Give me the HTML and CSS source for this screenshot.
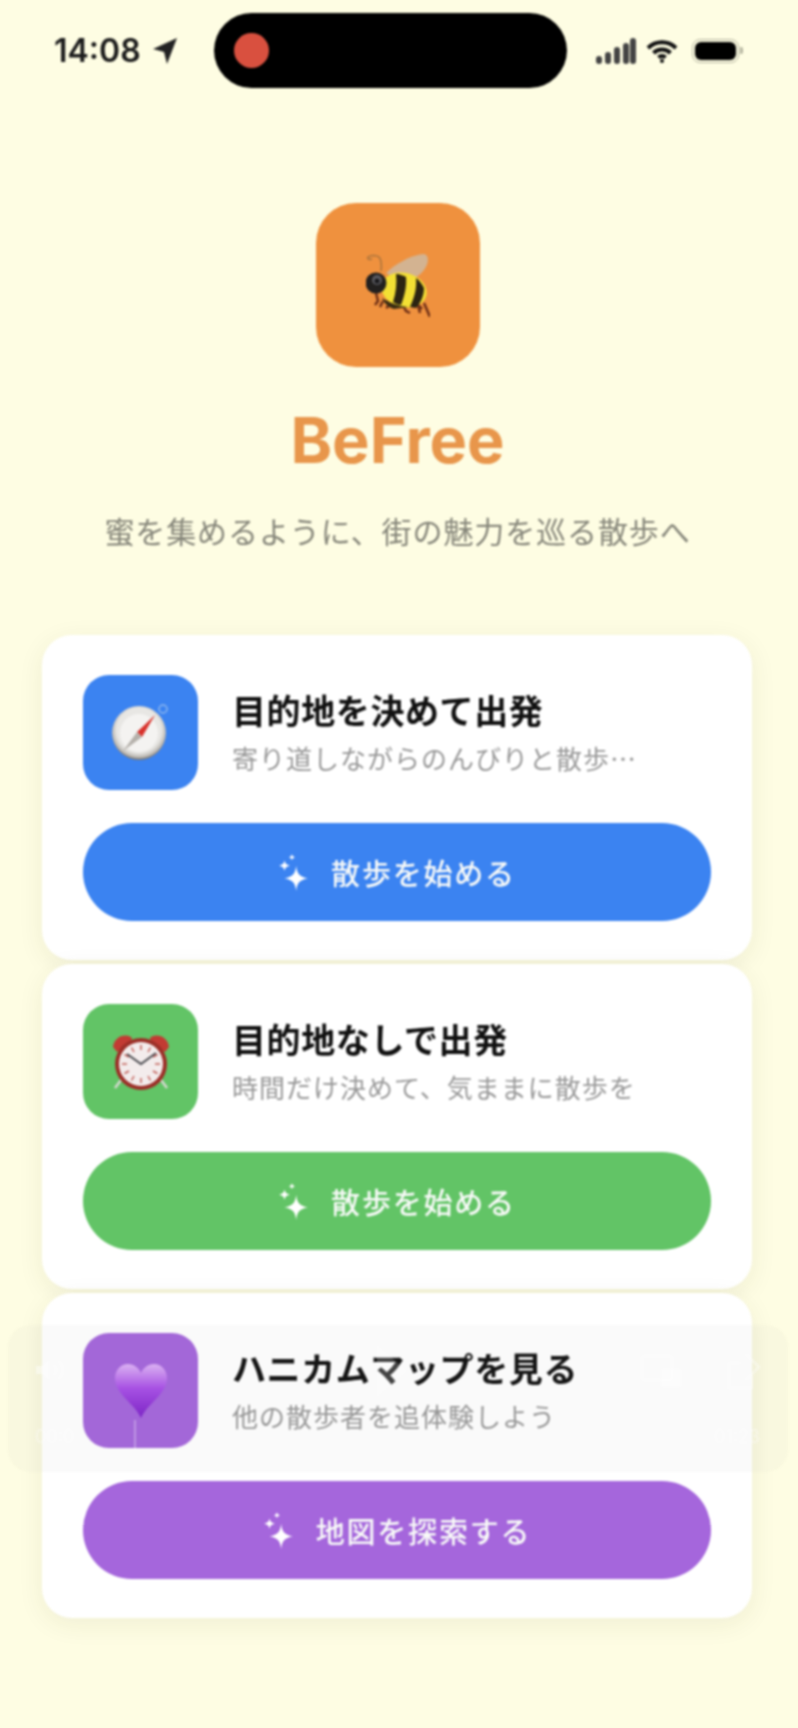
FILE: index.html
```html
<!DOCTYPE html>
<html lang="ja">
  <head>
    <meta charset="UTF-8" />
    <title>BeFree</title>
    <link rel="stylesheet" href="styles.css">
  </head>

  <body>
    <svg class="defs" width="0" height="0" aria-hidden="true">
      <symbol id="sparkles" viewBox="0 0 28 35">
        <path d="M17 11 C18 19 20 21 28 23 C20 25 18 27 17 35 C16 27 14 25 6 23 C14 21 16 19 17 11 Z" />
        <path d="M6 6 C6.5 9 7.5 10 11 11 C7.5 12 6.5 13 6 16 C5.5 13 4.500 12 1 11 C4.500 10 5.500 9 6 6 Z" />
        <path d="M13 0 C13.300 1.700 14 2.400 16 3 C14 3.600 13.300 4.300 13 6 C12.700 4.300 12 3.600 10 3 C12 2.400 12.700 1.700 13 0 Z" />
      </symbol>
    </svg>

    <div class="screen">
      <header class="statusbar">
        <div class="status-left">
          <span class="clock">14:08</span>
          <svg class="arrow" viewBox="0 0 26 28"><path d="M25 1 L15 27 L12 15 L1 12 Z" /></svg>
        </div>
        <div class="island"><span class="rec"></span></div>
        <div class="status-right">
          <svg class="signal" viewBox="0 0 40 26">
            <rect x="0" y="18" width="6" height="8" rx="3" />
            <rect x="9" y="14" width="6" height="12" rx="3" />
            <rect x="18" y="9" width="6" height="17" rx="3" />
            <rect x="27" y="5" width="6" height="21" rx="3" />
            <rect x="34" y="0" width="6" height="26" rx="3" />
          </svg>
          <svg class="wifi" viewBox="0 0 32 24">
            <path d="M2 9 A20 20 0 0 1 30 9" />
            <path d="M7.500 14 A12 12 0 0 1 24.500 14" />
            <path d="M12.500 18.500 A5 5 0 0 1 19.500 18.500" />
            <circle cx="16" cy="22" r="2" class="wifi-dot" />
          </svg>
          <div class="battery"><span class="battery-fill"></span></div>
        </div>
      </header>

      <section class="hero">
        <div class="logo">
          <svg class="bee" viewBox="0 0 64 64">
            <path d="M15 18 C16 12 15 6 13 4 C10 2 5 2 2 4 C1 6 3 7 6 6" fill="none" stroke="#a8733c" stroke-width="1.500" />
            <path d="M20 20 C28 12 44 2 58 1 C66 3 61 18 50 24 C40 28 28 26 20 20 Z" fill="#d3b391" />
            <path d="M10 40 L12 48 L9 52 M17 48 L14 54 M20 48 L24 52 L20 55 M36 50 L40 58 L44 60 M52 52 L56 56 M52 52 L54 60 M58 50 L64 64" stroke="#6e2f16" stroke-width="2.500" fill="none" />
            <ellipse cx="38" cy="37" rx="23" ry="17" transform="rotate(15 38 37)" fill="#f3e034" />
            <path d="M30 21 C34 21 38 23 40 24 C41 34 38 44 35 52 C32 52 30 51 27 49 C30 40 31 30 30 21 Z" fill="#2b2412" />
            <path d="M50 25 C53 27 56 31 58 35 C58 42 55 50 50 55 C48 55 46 54 44 54 C48 45 51 36 50 25 Z" fill="#2b2412" />
            <path d="M16 45 C24 50 32 53 42 54 L28 56 C22 54 18 50 16 45 Z" fill="#3a2d12" />
            <circle cx="10" cy="30" r="10.500" fill="#22201f" />
            <circle cx="11" cy="27" r="5" fill="#5a5a60" />
            <circle cx="11" cy="28" r="2.500" fill="#17171a" />
          </svg>
        </div>
        <h1 class="brand">BeFree</h1>
        <p class="tagline">蜜を集めるように、街の魅力を巡る散歩へ</p>
      </section>

      <main class="cards">
        <article class="card">
          <div class="card-head">
            <div class="tile tile-blue">
              <svg class="emoji" viewBox="0 0 60 60">
                <defs>
                  <radialGradient id="rim" cx="0.5" cy="0.45" r="0.55">
                    <stop offset="0.75" stop-color="#e8e7e4" />
                    <stop offset="0.9" stop-color="#bdbab5" />
                    <stop offset="1" stop-color="#6f6b65" />
                  </radialGradient>
                </defs>
                <circle cx="52" cy="6" r="4" fill="none" stroke="#8fb8ee" stroke-width="1.500" />
                <circle cx="28" cy="30" r="27" fill="url(#rim)" />
                <circle cx="28" cy="30" r="19" fill="#f4f3f1" />
                <path d="M44 12 L31 34 L26 29 Z" fill="#d8322c" />
                <path d="M12 48 L31 34 L26 29 Z" fill="#b5b1ab" />
              </svg>
            </div>
            <div class="card-text">
              <h2>目的地を決めて出発</h2>
              <p>寄り道しながらのんびりと散歩…</p>
            </div>
          </div>
          <button class="go go-blue"><svg class="spark"><use href="#sparkles" /></svg>散歩を始める</button>
        </article>

        <article class="card">
          <div class="card-head">
            <div class="tile tile-green">
              <svg class="emoji" viewBox="0 0 60 60">
                <path d="M10 48 L4 56 M50 48 L56 56" stroke="#d5d8d0" stroke-width="2.500" />
                <path d="M2 15 C3 6 12 1 20 5 C24 7 14 15 6 20 Z M58 15 C57 6 48 1 40 5 C36 7 46 15 54 20 Z" fill="#c23b33" />
                <circle cx="30" cy="32" r="26" fill="#9c2f28" />
                <circle cx="30" cy="32" r="22" fill="#f3ecec" />
                <path d="M30 13 V18 M30 46 V51 M11 32 H16 M44 32 H49 M20.500 15.500 L23 20 M39.500 15.500 L37 20 M20.500 48.500 L23 44 M39.500 48.500 L37 44 M13.500 22.500 L18 25 M46.500 22.500 L42 25 M13.500 41.500 L18 39 M46.500 41.500 L42 39" stroke="#c2605a" stroke-width="1.500" />
                <path d="M16 22 L30 32 L45 21" fill="none" stroke="#4b4b50" stroke-width="2" />
              </svg>
            </div>
            <div class="card-text">
              <h2>目的地なしで出発</h2>
              <p>時間だけ決めて、気ままに散歩を</p>
            </div>
          </div>
          <button class="go go-green"><svg class="spark"><use href="#sparkles" /></svg>散歩を始める</button>
        </article>

        <article class="card">
          <div class="card-head">
            <div class="tile tile-purple">
              <svg class="heart" viewBox="2 0 52 54">
                <defs>
                  <linearGradient id="heartfill" x1="0" y1="0" x2="0" y2="1">
                    <stop offset="0" stop-color="#dfb4f7" />
                    <stop offset="0.45" stop-color="#a950e8" />
                    <stop offset="1" stop-color="#7d22c9" />
                  </linearGradient>
                </defs>
                <path d="M28 54 C22 40 2 30 2 14 C2 6 8 0 15 0 C21 0 26 4 28 9 C30 4 35 0 41 0 C48 0 54 6 54 14 C54 30 34 40 28 54 Z" fill="url(#heartfill)" />
              </svg>
            </div>
            <div class="card-text">
              <h2>ハニカムマップを見る</h2>
              <p>他の散歩者を追体験しよう</p>
            </div>
          </div>
          <button class="go go-purple"><svg class="spark"><use href="#sparkles" /></svg>地図を探索する</button>
        </article>
      </main>

      <!-- screen recording player, nearly transparent on top of the page -->
      <div class="player">
        <svg class="player-sound" viewBox="0 0 32 24">
          <path d="M1 8 H7 L14 2 V22 L7 16 H1 Z" />
          <path class="line" d="M19 7 A7 7 0 0 1 19 17 M24 3 A13 13 0 0 1 24 21" />
        </svg>
        <svg class="player-play" viewBox="0 0 30 52"><path d="M0 0 L30 26 L0 52 Z" /></svg>
        <svg class="player-pip" viewBox="0 0 40 32">
          <rect class="line" x="1" y="1" width="30" height="24" rx="3" />
          <rect x="20" y="14" width="20" height="18" rx="2" />
        </svg>
        <svg class="player-share" viewBox="0 0 32 36">
          <path class="line" d="M1 10 V35 H24 V22 M1 10 H12 M18 1 L31 14 L18 27" />
        </svg>
        <span class="player-time player-start">00:0</span>
        <span class="player-tick"></span>
        <span class="player-time player-end">01:23</span>
      </div>
    </div>
  </body>
</html>
```

FILE: styles.css
```css
html,
body {
  margin: 0;
  background: #fefde3;
}

body {
  font-family: Inter, "Noto Sans CJK JP", sans-serif;
}

.defs {
  position: absolute;
}

.screen {
  position: relative;
  width: 798px;
  height: 1728px;
  overflow: hidden;
  filter: blur(0.9px);
}

/* status bar */
.statusbar {
  display: flex;
  align-items: center;
  height: 75px;
  padding: 13px 0 0 54px;
}

.status-left {
  display: flex;
  align-items: center;
  gap: 11px;
  width: 160px;
}

.clock {
  font-size: 32px;
  font-weight: 600;
  color: #1c1c1c;
}

.arrow {
  width: 26px;
  height: 28px;
  fill: #222;
}

.island {
  display: flex;
  align-items: center;
  width: 353px;
  height: 75px;
  padding-left: 20px;
  box-sizing: border-box;
  background: #000;
  border-radius: 38px;
}

.rec {
  width: 35px;
  height: 35px;
  background: #d9503f;
  border-radius: 50%;
}

.status-right {
  display: flex;
  align-items: center;
  gap: 10px;
  margin-left: 29px;
}

.signal {
  width: 40px;
  height: 26px;
  fill: #444;
}

.wifi {
  width: 32px;
  height: 24px;
  fill: none;
  stroke: #111;
  stroke-width: 4;
}

.wifi-dot {
  fill: #111;
  stroke: none;
}

.battery {
  position: relative;
  width: 47px;
  height: 24px;
  padding: 2px;
  box-sizing: border-box;
  border: 1.500px solid #b5b5a0;
  border-radius: 8px;
  margin-left: 4px;
}

.battery::after {
  content: "";
  position: absolute;
  right: -5px;
  top: 7px;
  width: 3px;
  height: 7px;
  background: #b5b5a0;
  border-radius: 0 2px 2px 0;
}

.battery-fill {
  display: block;
  height: 100%;
  background: #000;
  border-radius: 6px;
}

/* logo and name */
.hero {
  display: flex;
  flex-direction: column;
  align-items: center;
  padding: 115px 3px 0 0;
}

.logo {
  display: flex;
  align-items: center;
  justify-content: center;
  width: 164px;
  height: 164px;
  background: #ef913e;
  border-radius: 40px;
}

.bee {
  width: 64px;
  height: 64px;
}

.brand {
  margin: 34px 0 0;
  font-size: 63px;
  line-height: 78px;
  font-weight: 700;
  color: #e8964b;
}

.tagline {
  margin: 33px 0 0;
  font-size: 30px;
  line-height: 40px;
  letter-spacing: 0.9px;
  color: #86867a;
}

/* cards */
.cards {
  display: flex;
  flex-direction: column;
  gap: 4px;
  margin: 83px 46px 0 42px;
}

.card {
  padding: 40px 41px 39px;
  background: #fff;
  border-radius: 30px;
  box-shadow: 0 6px 26px rgba(60, 60, 20, 0.08);
}

.card-head {
  display: flex;
  align-items: center;
  gap: 34px;
}

.tile {
  display: flex;
  align-items: center;
  justify-content: center;
  flex: none;
  width: 115px;
  height: 115px;
  border-radius: 26px;
}

.tile-blue,
.go-blue {
  background: #3b83f1;
}

.tile-green,
.go-green {
  background: #62c466;
}

.tile-purple,
.go-purple {
  background: #a566dc;
}

.emoji {
  width: 60px;
  height: 60px;
}

.heart {
  width: 56px;
  height: 54px;
}

.card-text h2 {
  margin: 0;
  font-size: 34px;
  line-height: 44px;
  font-weight: 700;
  letter-spacing: 0.6px;
  color: #111;
}

.card-text p {
  margin: 6px 0 0;
  font-family: "Noto Sans CJK JP", sans-serif;
  font-size: 26px;
  line-height: 36px;
  letter-spacing: 1px;
  color: #999;
}

.go {
  display: flex;
  align-items: center;
  justify-content: center;
  gap: 23px;
  width: 100%;
  height: 98px;
  margin-top: 33px;
  padding: 0;
  border: none;
  border-radius: 49px;
  font-family: inherit;
  font-size: 29px;
  font-weight: 500;
  letter-spacing: 1.800px;
  color: #f8faf8;
}

.spark {
  width: 30px;
  height: 37px;
  fill: #fff;
}

/* video player overlay */
.player {
  position: absolute;
  left: 8px;
  top: 1325px;
  width: 780px;
  height: 147px;
  background: rgba(120, 120, 120, 0.04);
  border-radius: 22px;
}

.player svg {
  position: absolute;
  fill: rgba(255, 255, 255, 0.45);
}

.player .line {
  fill: none;
  stroke: rgba(255, 255, 255, 0.45);
  stroke-width: 2;
}

.player .player-play {
  left: 369px;
  top: 20px;
  width: 30px;
  height: 52px;
  fill: rgba(255, 255, 255, 0.2);
}

.player-sound {
  left: 27px;
  top: 33px;
  width: 32px;
  height: 24px;
}

.player-pip {
  left: 633px;
  top: 30px;
  width: 40px;
  height: 32px;
}

.player-share {
  left: 720px;
  top: 28px;
  width: 32px;
  height: 36px;
}

.player-time {
  position: absolute;
  top: 101px;
  font-size: 18px;
  line-height: 22px;
  color: rgba(255, 255, 255, 0.4);
}

.player-start {
  left: 27px;
}

.player-end {
  right: 28px;
}

.player-tick {
  position: absolute;
  left: 126px;
  top: 95px;
  width: 2px;
  height: 30px;
  background: rgba(255, 255, 255, 0.3);
}
```
